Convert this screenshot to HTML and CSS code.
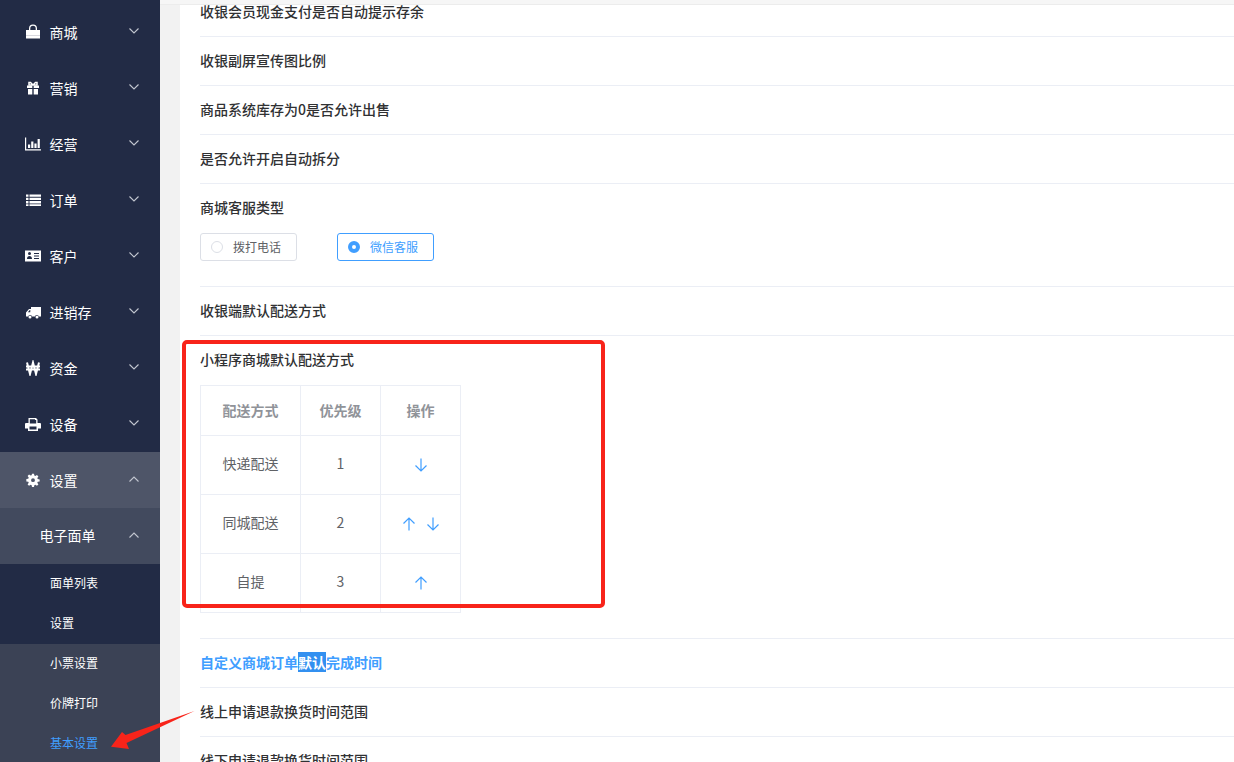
FILE: index.html
```html
<!DOCTYPE html>
<html lang="zh">
<head>
<meta charset="utf-8">
<title>基本设置</title>
<link rel="stylesheet" href="styles.css">
</head>
<body>
<svg class="defs" width="0" height="0">
  <defs>
    <symbol id="chev" viewBox="0 0 10 6"><path d="M.5.5 5 5 9.500.5" fill="none" stroke="currentColor" stroke-width="1.100"/></symbol>
    <symbol id="down" viewBox="0 0 14 14"><path d="M7 .5V13M1.500 7.500 7 13l5.500-5.500" fill="none" stroke="#409eff" stroke-width="1.200"/></symbol>
    <symbol id="up" viewBox="0 0 14 14"><path d="M7 13.500V1M1.500 6.500 7 1l5.500 5.500" fill="none" stroke="#409eff" stroke-width="1.200"/></symbol>
  </defs>
</svg>
<div class="app">
  <nav class="sidebar">
    <a class="nav-item"><span class="nav-label"><svg class="ico" viewBox="0 0 16 16"><path fill="#fff" fill-rule="evenodd" d="M1 6h3V4.500a4 4 0 0 1 8 0V6h3v8.500H1zM5.300 6h5.400V4.500a2.700 2.700 0 0 0-5.400 0z"/><path fill="#d8d8de" d="M1 11h14v1H1z"/></svg>商城</span><svg class="chev"><use href="#chev"/></svg></a>
    <a class="nav-item"><span class="nav-label"><svg class="ico" viewBox="0 0 16 16"><path fill="#fff" d="M2 5.500h5.300v2.500H2zM8.700 5.500H14v2.500H8.700zM3 9h4.300v5.500H3zM8.700 9H13v5.500H8.700z"/><path fill="none" stroke="#fff" stroke-width="1.500" d="M8 5 5.500 2.500H4v2.500h4zM8 5l2.500-2.500H12v2.500H8z"/></svg>营销</span><svg class="chev"><use href="#chev"/></svg></a>
    <a class="nav-item"><span class="nav-label"><svg class="ico" viewBox="0 0 16 16"><path fill="#fff" d="M0 1.500h1.200V13.300H16.500v1.200H0zM3 8.500h2.200V12H3zM6.200 5.500h2.200V12H6.200zM9.400 7.500h2.200V12H9.400zM12.600 3h2.200v9h-2.200z"/></svg>经营</span><svg class="chev"><use href="#chev"/></svg></a>
    <a class="nav-item"><span class="nav-label"><svg class="ico" viewBox="0 0 16 16"><path fill="#fff" d="M1 2.500h2.500v2.300H1zM4.500 2.500H16v2.300H4.500zM1 5.800h2.500v2.300H1zM4.500 5.800H16v2.300H4.500zM1 9.100h2.500v2.300H1zM4.500 9.100H16v2.300H4.500zM1 12.200h2.500v1.800H1zM4.500 12.200H16v1.800H4.500z"/></svg>订单</span><svg class="chev"><use href="#chev"/></svg></a>
    <a class="nav-item"><span class="nav-label"><svg class="ico" viewBox="0 0 16 16"><path fill="#fff" fill-rule="evenodd" d="M0 2.500h16v11H0zM3 5.500a1.500 1.500 0 1 0 3 0 1.500 1.500 0 0 0-3 0zM2 11h5c0-2-1-3-2.500-3S2 9 2 11zM9 5v1h5V5zm0 2.500v1h5v-1zm0 2.500v1h5v-1z"/></svg>客户</span><svg class="chev"><use href="#chev"/></svg></a>
    <a class="nav-item"><span class="nav-label"><svg class="ico" viewBox="0 0 16 16"><path fill="#fff" fill-rule="evenodd" d="M6 3h10v9.500h-2.200a2 2 0 0 0-3.800 0H7a2 2 0 0 0-3.800 0H1V8.500L4 5h2zM2.800 8.300H5.300V6H4.800z"/><circle cx="5" cy="13" r="1.500" fill="#fff"/><circle cx="12" cy="13" r="1.500" fill="#fff"/></svg>进销存</span><svg class="chev"><use href="#chev"/></svg></a>
    <a class="nav-item"><span class="nav-label"><svg class="ico" viewBox="0 0 16 16"><path fill="none" stroke="#fff" stroke-width="2" d="M2 2.500 5 14l3-11.500L11 14l3-11.500M1 6.500h14M1 9.500h14"/></svg>资金</span><svg class="chev"><use href="#chev"/></svg></a>
    <a class="nav-item"><span class="nav-label"><svg class="ico" viewBox="0 0 16 16"><path fill="#fff" fill-rule="evenodd" d="M3.500 2H11l1.500 1.500V7H15a1 1 0 0 1 1 1v4.500h-3V15H3v-2.500H0V8a1 1 0 0 1 1-1h2.500zM4.800 3.300V7.500h6.400V4H10V3.300zM4.500 10.500v3h7v-3z"/></svg>设备</span><svg class="chev"><use href="#chev"/></svg></a>
    <a class="nav-item is-open"><span class="nav-label"><svg class="ico" viewBox="-1.500 -1.500 19 19"><path fill="#fff" fill-rule="evenodd" d="M6.800 .5h2.400l.4 2.300 1.200.5 1.900-1.300 1.700 1.700-1.300 1.900.5 1.300 2.300.4v2.400l-2.300.4-.5 1.200 1.300 1.900-1.700 1.700-1.900-1.300-1.200.5-.4 2.300H6.800l-.4-2.300-1.200-.5-1.900 1.300-1.700-1.700 1.300-1.900-.5-1.200-2.300-.4V6.800l2.300-.4.500-1.300-1.300-1.900 1.700-1.700 1.900 1.300 1.200-.5zM8 5.900a2.300 2.300 0 1 0 0 4.600 2.300 2.300 0 0 0 0-4.600z"/></svg>设置</span><svg class="chev chev-up"><use href="#chev"/></svg></a>
    <a class="nav-group"><span>电子面单</span><svg class="chev chev-up"><use href="#chev"/></svg></a>
    <div class="nav-dark">
      <a class="nav-sub">面单列表</a>
      <a class="nav-sub">设置</a>
    </div>
    <div class="nav-mid">
      <a class="nav-sub">小票设置</a>
      <a class="nav-sub">价牌打印</a>
      <a class="nav-sub is-active">基本设置</a>
    </div>
  </nav>
  <main class="main">
    <div class="topline"></div>
    <div class="panel">
      <div class="row row-first">收银会员现金支付是否自动提示存余</div>
      <div class="row">收银副屏宣传图比例</div>
      <div class="row">商品系统库存为0是否允许出售</div>
      <div class="row">是否允许开启自动拆分</div>
      <div class="row">
        商城客服类型
        <div class="row-body radios">
          <label class="radio"><i class="dot"></i>拨打电话</label>
          <label class="radio is-on"><i class="dot"></i>微信客服</label>
        </div>
      </div>
      <div class="row">收银端默认配送方式</div>
      <div class="row">
        小程序商城默认配送方式
        <div class="row-body">
          <table class="tbl">
            <thead><tr><th class="c1">配送方式</th><th class="c2">优先级</th><th class="c3">操作</th></tr></thead>
            <tbody>
              <tr><td>快递配送</td><td>1</td><td><span class="ops"><svg class="arr"><use href="#down"/></svg></span></td></tr>
              <tr><td>同城配送</td><td>2</td><td><span class="ops"><svg class="arr"><use href="#up"/></svg><svg class="arr"><use href="#down"/></svg></span></td></tr>
              <tr><td>自提</td><td>3</td><td><span class="ops"><svg class="arr"><use href="#up"/></svg></span></td></tr>
            </tbody>
          </table>
        </div>
      </div>
      <div class="row row-link">自定义商城订单<span class="sel">默认</span>完成时间</div>
      <div class="row">线上申请退款换货时间范围</div>
      <div class="row">线下申请退款换货时间范围</div>
    </div>
  </main>
</div>
<div class="redbox"></div>
<svg class="redarrow" viewBox="0 0 90 42" width="90" height="42"><polygon fill="#f8241a" points="84.500,3 15.500,27 12,24 1,38.700 19,41 16.500,35"/></svg>
</body>
</html>
```
FILE: styles.css
```css
* { box-sizing: border-box; }
html, body { margin: 0; height: 762px; overflow: hidden; background: #fff; }
body { font-family: "Microsoft YaHei", "Noto Sans CJK SC", "Liberation Sans", sans-serif; position: relative; }
.defs { position: absolute; }
.app { display: flex; height: 762px; }

.sidebar { width: 160px; flex: none; background: #222b45; color: #fff; font-size: 14px; padding-top: 4px; height: 762px; overflow: hidden; }
.nav-item { display: flex; align-items: center; justify-content: space-between; height: 56px; padding: 0 21px 0 25px; }
.nav-item.is-open { background: #4e5568; }
.nav-label { display: flex; align-items: center; gap: 8.500px; line-height: 20px; }
.ico { width: 16px; height: 16px; flex: none; }
.chev { width: 10px; height: 6px; flex: none; margin-bottom: 3px; color: #c3c7d0; }
.chev-up { transform: rotate(180deg); }
.nav-group { display: flex; align-items: center; justify-content: space-between; height: 56px; padding: 0 21px 2px 39.500px; background: #424a5e; }
.nav-group .chev { margin-bottom: 1px; }
.nav-dark { background: #222b45; }
.nav-mid { background: #3b4255; }
.nav-sub { display: block; height: 40px; line-height: 38px; padding-left: 50px; font-size: 12px; }
.nav-sub.is-active { color: #409eff; }

.main { flex: 1; min-width: 0; background: #f2f2f2; display: flex; flex-direction: column; }
.topline { height: 5px; flex: none; background: #f6f6f6; border-bottom: 1px solid #ececec; }
.panel { margin-left: 20px; padding-left: 20px; background: #fff; flex: 1; color: #303133; font-size: 14px; font-weight: 500; }
.row { padding: 11px 0 13px; line-height: 24px; border-bottom: 1px solid #ebeef5; }
.row-first { padding: 0 0 13px; height: 32px; line-height: 13px; }
.row-body { margin: 14px 0 12px; font-weight: 400; }
.radios { display: flex; gap: 40px; }
.radio { display: flex; align-items: center; gap: 10px; width: 97px; height: 28px; padding-left: 10px; border: 1px solid #dcdfe6; border-radius: 3px; font-size: 12px; color: #606266; }
.dot { width: 12px; height: 12px; border: 1px solid #dcdfe6; border-radius: 50%; background: #fff; flex: none; }
.radio.is-on { border-color: #409eff; color: #409eff; }
.radio.is-on .dot { border: 4px solid #409eff; }

.tbl { border-collapse: collapse; table-layout: fixed; width: 260px; text-align: center; font-size: 14px; color: #606266; }
.tbl th, .tbl td { border: 1px solid #ebeef5; }
.tbl th { height: 50px; padding: 0 0 2px; color: #909399; font-weight: 700; }
.tbl td { height: 59px; padding: 0 0 5px; }
.c1 { width: 100px; }
.c2 { width: 80px; }
.c3 { width: 80px; }
.ops { display: flex; justify-content: center; gap: 10px; margin-top: 4px; }
.arr { width: 14px; height: 14px; }

.row-link { color: #409eff; font-weight: 700; font-size: 14px; }
.sel { background: #3390f0; color: #fff; }

.redbox { position: absolute; left: 182px; top: 340px; width: 423px; height: 268px; border: 4px solid #f8241a; border-radius: 5px; pointer-events: none; }
.redarrow { position: absolute; left: 110px; top: 708px; }
```
